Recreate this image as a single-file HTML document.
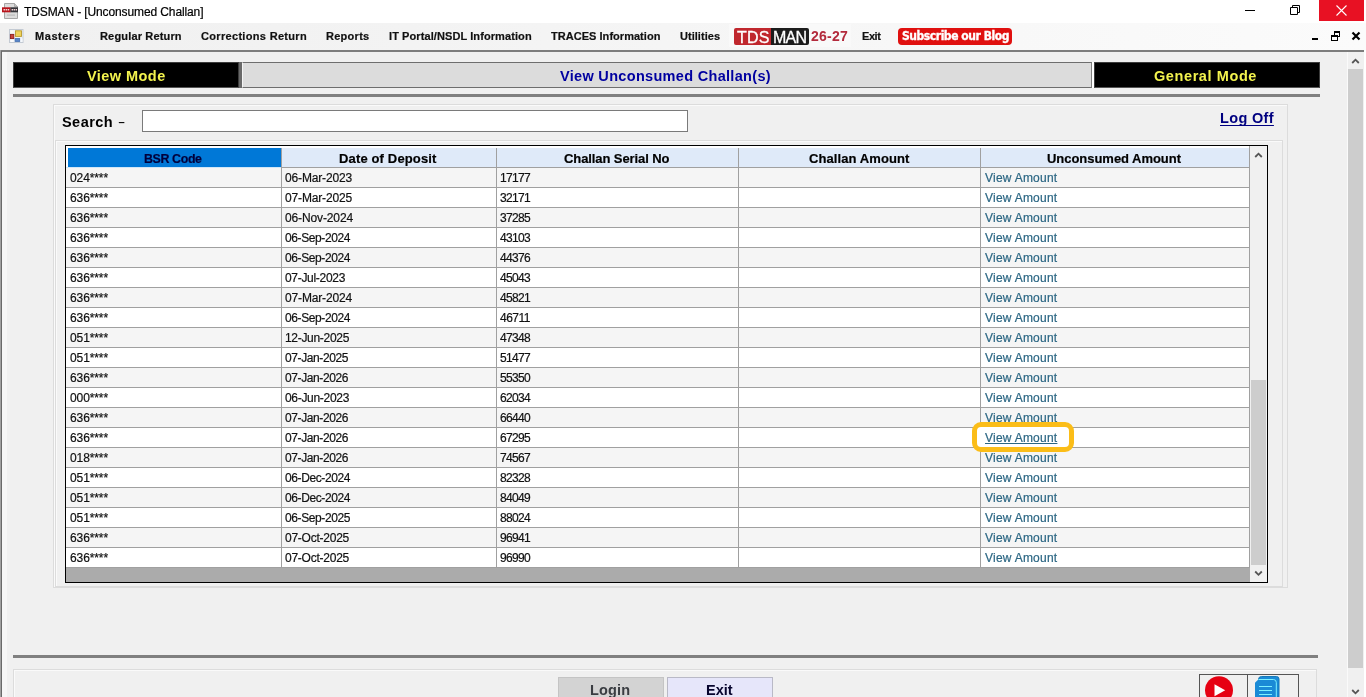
<!DOCTYPE html>
<html lang="en">
<head>
<meta charset="utf-8">
<title>TDSMAN - [Unconsumed Challan]</title>
<style>
html,body{margin:0;padding:0;}
body{width:1366px;height:697px;overflow:hidden;background:#f0f0f0;position:relative;font-family:"Liberation Sans",Arial,sans-serif;}
.b{position:absolute;box-sizing:border-box;}
.t{position:absolute;white-space:pre;margin:0;padding:0;will-change:transform;}
svg{position:absolute;overflow:visible;}
</style>
</head>
<body>
<!-- title bar -->
<div class="b" style="left:0;top:0;width:1366px;height:23px;background:#fff"></div>
<!-- menu bar -->
<div class="b" style="left:0;top:23px;width:1366px;height:27px;background:linear-gradient(90deg,#f0f0f0 0%,#f4f4f4 40%,#fbfbfb 100%)"></div>
<!-- client frame -->
<div class="b" style="left:0;top:50px;width:1365px;height:2px;background:#7d7d7d"></div>
<div class="b" style="left:0;top:50px;width:1px;height:647px;background:#a0a0a0"></div>
<div class="b" style="left:1px;top:51px;width:1px;height:646px;background:#696969"></div>
<div class="b" style="left:2px;top:52px;width:5px;height:645px;background:#f6f6f6"></div>
<div class="b" style="left:1364px;top:50px;width:2px;height:647px;background:#fff"></div>
<!-- close button -->
<div class="b" style="left:1319px;top:0;width:45px;height:21px;background:#e81123"></div>
<svg style="left:0;top:0" width="1366" height="52">
  <path d="M1245 10.5H1255" stroke="#000" stroke-width="1" fill="none"/>
  <path d="M1290.5 7.5H1297.5V14.5H1290.5Z M1292.5 7.5V5.5H1299.5V12.5H1297.5" stroke="#000" stroke-width="1" fill="none"/>
  <path d="M1336.5 5.5L1346.5 15.5M1346.5 5.5L1336.5 15.5" stroke="#fff" stroke-width="1.1" fill="none"/>
  <!-- mdi controls -->
  <path d="M1312 39H1318" stroke="#000" stroke-width="2" fill="none"/>
  <g fill="#000" shape-rendering="crispEdges">
    <rect x="1334" y="31" width="6" height="2"/><rect x="1334" y="31" width="1" height="4"/><rect x="1339" y="31" width="1" height="6"/><rect x="1338" y="36" width="2" height="1"/>
    <rect x="1331" y="35" width="7" height="2"/><rect x="1331" y="35" width="1" height="6"/><rect x="1337" y="35" width="1" height="6"/><rect x="1331" y="40" width="7" height="1"/>
  </g>
  <path d="M1352.5 32.5L1359.5 39.5M1359.5 32.5L1352.5 39.5" stroke="#000" stroke-width="2.2" fill="none"/>
</svg>
<!-- title icon -->
<svg style="left:2px;top:3px" width="17" height="17" viewBox="0 0 17 17">
  <path d="M2.5 0.5H12.5L15.5 3.5V15.5H2.5Z" fill="#dcdcdc" stroke="#a6a6a6" stroke-width="1"/>
  <path d="M12.5 0.5V3.5H15.5" fill="#c4c4c4" stroke="#a0a0a0" stroke-width="0.8"/>
  <rect x="0" y="4.3" width="8.6" height="5" fill="#b8141c"/>
  <rect x="8.4" y="4.3" width="7.6" height="5" fill="#35353a"/>
  <path d="M1.5 6.8H7.2M9.6 6.8H15" stroke="#f3d3d5" stroke-width="1.4" stroke-dasharray="1.5 0.6"/>
  <rect x="5" y="11.3" width="8" height="1.6" fill="#c3c3c3"/>
</svg>
<!-- menu icon -->
<svg style="left:9px;top:29px" width="15" height="14" viewBox="0 0 15 14">
  <rect x="0.5" y="0.5" width="13.5" height="13" fill="#eef1f5" stroke="#c3cad3"/>
  <rect x="1.5" y="1.5" width="3" height="2.5" fill="#fbfbf3"/>
  <rect x="1.5" y="10.5" width="3" height="2.5" fill="#fcfcfc"/>
  <rect x="11" y="9.5" width="2.5" height="3.5" fill="#f5f8fb"/>
  <rect x="6.5" y="1.8" width="6" height="5.6" fill="#eed25a" stroke="#b99a2e" stroke-width="0.9"/>
  <rect x="1.4" y="5.4" width="3.4" height="4.2" fill="#c8433c" stroke="#8e1f1c" stroke-width="0.9"/>
  <rect x="6.1" y="9.6" width="4.6" height="2.8" fill="#5a86c8" stroke="#3f6cb0" stroke-width="0.8"/>
</svg>
<!-- logo -->
<div class="b" style="left:729px;top:24px;width:122px;height:23px;background:#f9f9f9"></div>
<div class="b" style="left:734px;top:28px;width:38px;height:17px;background:#c0272d;border-radius:2px 0 0 2px"></div>
<div class="b" style="left:771px;top:28px;width:38px;height:17px;background:#1c1c1c;border-radius:0 2px 2px 0"></div>
<!-- subscribe -->
<div class="b" style="left:898px;top:28px;width:114px;height:17px;background:#e0100f;border-radius:4px"></div>

<!-- mode bar -->
<div class="b" style="left:13px;top:62px;width:226px;height:26px;background:#000;border:1px solid #3c3c3c;border-bottom-color:#555"></div>
<div class="b" style="left:239px;top:62px;width:3px;height:26px;background:#696969"></div>
<div class="b" style="left:242px;top:62px;width:850px;height:26px;background:#dcdcdc;border-top:1px solid #6e6e6e;border-bottom:1px solid #6e6e6e;border-right:1px solid #808080;border-left:1px solid #f4f4f4"></div>
<div class="b" style="left:1092px;top:62px;width:2px;height:26px;background:#fff"></div>
<div class="b" style="left:1094px;top:62px;width:226px;height:26px;background:#000;border:1px solid #3c3c3c;border-bottom-color:#555"></div>
<div class="b" style="left:13px;top:94px;width:1307px;height:3px;background:#808080"></div>

<!-- group boxes -->
<div class="b" style="left:53px;top:104px;width:1235px;height:484px;border:1px solid #dcdcdc;box-shadow:inset 1px 1px 0 #fafafa"></div>
<div class="b" style="left:55px;top:140px;width:1228px;height:447px;border:1px solid #dcdcdc;box-shadow:inset 1px 1px 0 #fafafa"></div>
<!-- search input -->
<div class="b" style="left:142px;top:110px;width:546px;height:22px;background:#fff;border:1px solid #7a7a7a"></div>

<!-- grid -->
<div class="b" style="left:65px;top:145px;width:1203px;height:438px;background:#ababab;border:1px solid #000"></div>
<div class="b" style="left:66px;top:146px;width:1184px;height:22px;background:#fff"></div>
<div class="b" style="left:68px;top:148px;width:213px;height:19px;background:#0078d7"></div>
<div class="b" style="left:66px;top:167px;width:215px;height:1px;background:#cfe6f8"></div>
<div class="b" style="left:282px;top:148px;width:967px;height:19px;background:#dfeaf9"></div>
<div class="b" style="left:281px;top:167px;width:969px;height:1px;background:#a0a0a0"></div>
<div class="b" style="left:66px;top:168px;width:1183px;height:19px;background:#f5f5f5"></div>
<div class="b" style="left:66px;top:187px;width:1184px;height:1px;background:#a0a0a0"></div>
<div class="b" style="left:66px;top:188px;width:1183px;height:19px;background:#fff"></div>
<div class="b" style="left:66px;top:207px;width:1184px;height:1px;background:#a0a0a0"></div>
<div class="b" style="left:66px;top:208px;width:1183px;height:19px;background:#f5f5f5"></div>
<div class="b" style="left:66px;top:227px;width:1184px;height:1px;background:#a0a0a0"></div>
<div class="b" style="left:66px;top:228px;width:1183px;height:19px;background:#fff"></div>
<div class="b" style="left:66px;top:247px;width:1184px;height:1px;background:#a0a0a0"></div>
<div class="b" style="left:66px;top:248px;width:1183px;height:19px;background:#f5f5f5"></div>
<div class="b" style="left:66px;top:267px;width:1184px;height:1px;background:#a0a0a0"></div>
<div class="b" style="left:66px;top:268px;width:1183px;height:19px;background:#fff"></div>
<div class="b" style="left:66px;top:287px;width:1184px;height:1px;background:#a0a0a0"></div>
<div class="b" style="left:66px;top:288px;width:1183px;height:19px;background:#f5f5f5"></div>
<div class="b" style="left:66px;top:307px;width:1184px;height:1px;background:#a0a0a0"></div>
<div class="b" style="left:66px;top:308px;width:1183px;height:19px;background:#fff"></div>
<div class="b" style="left:66px;top:327px;width:1184px;height:1px;background:#a0a0a0"></div>
<div class="b" style="left:66px;top:328px;width:1183px;height:19px;background:#f5f5f5"></div>
<div class="b" style="left:66px;top:347px;width:1184px;height:1px;background:#a0a0a0"></div>
<div class="b" style="left:66px;top:348px;width:1183px;height:19px;background:#fff"></div>
<div class="b" style="left:66px;top:367px;width:1184px;height:1px;background:#a0a0a0"></div>
<div class="b" style="left:66px;top:368px;width:1183px;height:19px;background:#f5f5f5"></div>
<div class="b" style="left:66px;top:387px;width:1184px;height:1px;background:#a0a0a0"></div>
<div class="b" style="left:66px;top:388px;width:1183px;height:19px;background:#fff"></div>
<div class="b" style="left:66px;top:407px;width:1184px;height:1px;background:#a0a0a0"></div>
<div class="b" style="left:66px;top:408px;width:1183px;height:19px;background:#f5f5f5"></div>
<div class="b" style="left:66px;top:427px;width:1184px;height:1px;background:#a0a0a0"></div>
<div class="b" style="left:66px;top:428px;width:1183px;height:19px;background:#fff"></div>
<div class="b" style="left:66px;top:447px;width:1184px;height:1px;background:#a0a0a0"></div>
<div class="b" style="left:66px;top:448px;width:1183px;height:19px;background:#f5f5f5"></div>
<div class="b" style="left:66px;top:467px;width:1184px;height:1px;background:#a0a0a0"></div>
<div class="b" style="left:66px;top:468px;width:1183px;height:19px;background:#fff"></div>
<div class="b" style="left:66px;top:487px;width:1184px;height:1px;background:#a0a0a0"></div>
<div class="b" style="left:66px;top:488px;width:1183px;height:19px;background:#f5f5f5"></div>
<div class="b" style="left:66px;top:507px;width:1184px;height:1px;background:#a0a0a0"></div>
<div class="b" style="left:66px;top:508px;width:1183px;height:19px;background:#fff"></div>
<div class="b" style="left:66px;top:527px;width:1184px;height:1px;background:#a0a0a0"></div>
<div class="b" style="left:66px;top:528px;width:1183px;height:19px;background:#f5f5f5"></div>
<div class="b" style="left:66px;top:547px;width:1184px;height:1px;background:#a0a0a0"></div>
<div class="b" style="left:66px;top:548px;width:1183px;height:19px;background:#fff"></div>
<div class="b" style="left:66px;top:567px;width:1184px;height:1px;background:#a0a0a0"></div>
<div class="b" style="left:281px;top:148px;width:1px;height:420px;background:#a0a0a0"></div>
<div class="b" style="left:496px;top:148px;width:1px;height:420px;background:#a0a0a0"></div>
<div class="b" style="left:738px;top:148px;width:1px;height:420px;background:#a0a0a0"></div>
<div class="b" style="left:980px;top:148px;width:1px;height:420px;background:#a0a0a0"></div>
<div class="b" style="left:1249px;top:146px;width:1px;height:422px;background:#a0a0a0"></div>
<!-- grid scrollbar -->
<div class="b" style="left:1250px;top:146px;width:17px;height:436px;background:#f0f0f0"></div>
<div class="b" style="left:1251px;top:380px;width:15px;height:185px;background:#cdcdcd"></div>
<svg style="left:1250px;top:146px" width="17" height="436">
  <path d="M5.2 11L8.5 7.7L11.8 11" stroke="#555" stroke-width="1.8" fill="none"/>
  <path d="M5.2 425.5L8.5 428.8L11.8 425.5" stroke="#555" stroke-width="1.8" fill="none"/>
</svg>
<!-- highlight -->
<div class="b" style="left:972px;top:422px;width:102px;height:30px;border:5px solid #fbbd18;border-radius:9px;background:#fff"></div>

<!-- bottom -->
<div class="b" style="left:13px;top:655px;width:1305px;height:3px;background:#808080"></div>
<div class="b" style="left:13px;top:669px;width:1304px;height:40px;border:1px solid #dcdcdc;box-shadow:inset 1px 1px 0 #fafafa"></div>
<div class="b" style="left:558px;top:677px;width:106px;height:30px;background:#d3d3d3;border:1px solid #c4c4c4"></div>
<div class="b" style="left:667px;top:677px;width:106px;height:30px;background:#e6e6fa;border:1px solid #b9b9c6"></div>
<div class="b" style="left:1199px;top:674px;width:100px;height:30px;border:1px solid #555"></div>
<div class="b" style="left:1247px;top:674px;width:1px;height:30px;background:#555"></div>
<svg style="left:1199px;top:674px" width="100" height="23">
  <circle cx="20" cy="16.2" r="14" fill="#e60012"/>
  <path d="M15.5 10.2L26.2 16.2L15.5 22.2Z" fill="#fff"/>
  <path d="M59.5 5.5Q59.5 2.5 62.5 2.5H77.5Q80 2.5 80 5V23H59.5Z" fill="#1a8ad6" stroke="#157ab8" stroke-width="1"/>
  <path d="M56 8.8L59.3 5.5H74.5Q77 5.5 77 8V23H56Z" fill="#1a8ad6"/>
  <path d="M59.5 5.5H74.5Q77.3 5.5 77.3 8.5V23" stroke="#7df0ff" stroke-width="1" fill="none"/>
  <path d="M60 12.5H73M60 16.5H73M60 20.5H73" stroke="#7df0ff" stroke-width="1.2" fill="none"/>
</svg>

<!-- main scrollbar -->
<div class="b" style="left:1347px;top:52px;width:17px;height:645px;background:#f0f0f0"></div>
<div class="b" style="left:1347px;top:52px;width:1px;height:645px;background:#fafafa"></div>
<div class="b" style="left:1348px;top:69px;width:15px;height:599px;background:#cdcdcd"></div>
<svg style="left:1347px;top:52px" width="17" height="645">
  <path d="M5.2 11L8.5 7.7L11.8 11" stroke="#555" stroke-width="1.8" fill="none"/>
  <path d="M5.2 638L8.5 641.3L11.8 638" stroke="#555" stroke-width="1.8" fill="none"/>
</svg>

<!-- texts -->
<div class="t" style="left:23.80px;top:5.00px;font-size:12px;line-height:14px;font-weight:400;color:#000;letter-spacing:-0.116px;-webkit-text-stroke:0.2px #000;">TDSMAN - [Unconsumed Challan]</div>
<div class="t" style="left:35.40px;top:30.00px;font-size:11px;line-height:12px;font-weight:700;color:#111;letter-spacing:0.570px;-webkit-text-stroke:0.2px #111;">Masters</div>
<div class="t" style="left:100.10px;top:30.00px;font-size:11px;line-height:12px;font-weight:700;color:#111;letter-spacing:0.164px;-webkit-text-stroke:0.2px #111;">Regular Return</div>
<div class="t" style="left:200.90px;top:30.00px;font-size:11px;line-height:12px;font-weight:700;color:#111;letter-spacing:0.321px;-webkit-text-stroke:0.2px #111;">Corrections Return</div>
<div class="t" style="left:326.00px;top:30.00px;font-size:11px;line-height:12px;font-weight:700;color:#111;letter-spacing:0.273px;-webkit-text-stroke:0.2px #111;">Reports</div>
<div class="t" style="left:389.00px;top:30.00px;font-size:11px;line-height:12px;font-weight:700;color:#111;letter-spacing:0.090px;-webkit-text-stroke:0.2px #111;">IT Portal/NSDL Information</div>
<div class="t" style="left:551.30px;top:30.00px;font-size:11px;line-height:12px;font-weight:700;color:#111;letter-spacing:0.036px;-webkit-text-stroke:0.2px #111;">TRACES Information</div>
<div class="t" style="left:680.10px;top:30.00px;font-size:11px;line-height:12px;font-weight:700;color:#111;letter-spacing:0.033px;-webkit-text-stroke:0.2px #111;">Utilities</div>
<div class="t" style="left:862.10px;top:30.00px;font-size:11px;line-height:12px;font-weight:700;color:#111;letter-spacing:-0.429px;-webkit-text-stroke:0.2px #111;">Exit</div>
<div class="t" style="left:87.20px;top:68.00px;font-size:14.5px;line-height:16px;font-weight:700;color:#f3f34e;letter-spacing:0.441px;">View Mode</div>
<div class="t" style="left:560.00px;top:68.00px;font-size:14.5px;line-height:16px;font-weight:700;color:#0000a0;letter-spacing:0.313px;">View Unconsumed Challan(s)</div>
<div class="t" style="left:1154.20px;top:68.00px;font-size:14.5px;line-height:16px;font-weight:700;color:#f3f34e;letter-spacing:0.592px;">General Mode</div>
<div class="t" style="left:62.40px;top:114.00px;font-size:14.5px;line-height:16px;font-weight:700;color:#000;letter-spacing:0.445px;">Search <span style="position:absolute;left:55.90px;top:-1px;font-size:15px;letter-spacing:0;transform:scale(1.45,0.6);transform-origin:0 70%">-</span></div>
<div class="t" style="left:1220.20px;top:110.00px;font-size:14.5px;line-height:16px;font-weight:700;color:#000080;letter-spacing:0.336px;text-decoration:underline;text-decoration-thickness:1px;text-underline-offset:2px;text-decoration-skip-ink:none;">Log Off</div>
<div class="t" style="left:590.40px;top:682.00px;font-size:14.5px;line-height:16px;font-weight:700;color:#3a3d42;letter-spacing:0.133px;">Login</div>
<div class="t" style="left:706.20px;top:682.00px;font-size:14.5px;line-height:16px;font-weight:700;color:#07052e;letter-spacing:0.002px;">Exit</div>
<div class="t" style="left:143.60px;top:152.00px;font-size:12.4px;line-height:14px;font-weight:700;color:#00003c;letter-spacing:-0.371px;-webkit-text-stroke:0.2px #00003c;">BSR Code</div>
<div class="t" style="left:339.40px;top:151.00px;font-size:13px;line-height:15px;font-weight:700;color:#000;letter-spacing:0.147px;-webkit-text-stroke:0.2px #000;">Date of Deposit</div>
<div class="t" style="left:564.30px;top:151.00px;font-size:13px;line-height:15px;font-weight:700;color:#000;letter-spacing:-0.089px;-webkit-text-stroke:0.2px #000;">Challan Serial No</div>
<div class="t" style="left:808.80px;top:151.00px;font-size:13px;line-height:15px;font-weight:700;color:#000;letter-spacing:0.093px;-webkit-text-stroke:0.2px #000;">Challan Amount</div>
<div class="t" style="left:1047.20px;top:151.00px;font-size:13px;line-height:15px;font-weight:700;color:#000;letter-spacing:-0.036px;-webkit-text-stroke:0.2px #000;">Unconsumed Amount</div>
<div class="t" style="left:69.70px;top:171.00px;font-size:12px;line-height:14px;font-weight:400;color:#111;letter-spacing:-0.100px;-webkit-text-stroke:0.2px #111;">024****</div>
<div class="t" style="left:284.80px;top:171.00px;font-size:12px;line-height:14px;font-weight:400;color:#111;letter-spacing:-0.155px;-webkit-text-stroke:0.2px #111;">06-Mar-2023</div>
<div class="t" style="left:500.20px;top:171.00px;font-size:12px;line-height:14px;font-weight:400;color:#111;letter-spacing:-0.675px;-webkit-text-stroke:0.2px #111;">17177</div>
<div class="t" style="left:985.00px;top:171.00px;font-size:12px;line-height:14px;font-weight:400;color:#2b6683;letter-spacing:0.237px;-webkit-text-stroke:0.2px #2b6683;">View Amount</div>
<div class="t" style="left:69.70px;top:191.00px;font-size:12px;line-height:14px;font-weight:400;color:#111;letter-spacing:-0.100px;-webkit-text-stroke:0.2px #111;">636****</div>
<div class="t" style="left:284.80px;top:191.00px;font-size:12px;line-height:14px;font-weight:400;color:#111;letter-spacing:-0.155px;-webkit-text-stroke:0.2px #111;">07-Mar-2025</div>
<div class="t" style="left:500.20px;top:191.00px;font-size:12px;line-height:14px;font-weight:400;color:#111;letter-spacing:-0.675px;-webkit-text-stroke:0.2px #111;">32171</div>
<div class="t" style="left:985.00px;top:191.00px;font-size:12px;line-height:14px;font-weight:400;color:#2b6683;letter-spacing:0.237px;-webkit-text-stroke:0.2px #2b6683;">View Amount</div>
<div class="t" style="left:69.70px;top:211.00px;font-size:12px;line-height:14px;font-weight:400;color:#111;letter-spacing:-0.100px;-webkit-text-stroke:0.2px #111;">636****</div>
<div class="t" style="left:284.80px;top:211.00px;font-size:12px;line-height:14px;font-weight:400;color:#111;letter-spacing:-0.125px;-webkit-text-stroke:0.2px #111;">06-Nov-2024</div>
<div class="t" style="left:500.20px;top:211.00px;font-size:12px;line-height:14px;font-weight:400;color:#111;letter-spacing:-0.675px;-webkit-text-stroke:0.2px #111;">37285</div>
<div class="t" style="left:985.00px;top:211.00px;font-size:12px;line-height:14px;font-weight:400;color:#2b6683;letter-spacing:0.237px;-webkit-text-stroke:0.2px #2b6683;">View Amount</div>
<div class="t" style="left:69.70px;top:231.00px;font-size:12px;line-height:14px;font-weight:400;color:#111;letter-spacing:-0.100px;-webkit-text-stroke:0.2px #111;">636****</div>
<div class="t" style="left:284.80px;top:231.00px;font-size:12px;line-height:14px;font-weight:400;color:#111;letter-spacing:-0.399px;-webkit-text-stroke:0.2px #111;">06-Sep-2024</div>
<div class="t" style="left:500.20px;top:231.00px;font-size:12px;line-height:14px;font-weight:400;color:#111;letter-spacing:-0.675px;-webkit-text-stroke:0.2px #111;">43103</div>
<div class="t" style="left:985.00px;top:231.00px;font-size:12px;line-height:14px;font-weight:400;color:#2b6683;letter-spacing:0.237px;-webkit-text-stroke:0.2px #2b6683;">View Amount</div>
<div class="t" style="left:69.70px;top:251.00px;font-size:12px;line-height:14px;font-weight:400;color:#111;letter-spacing:-0.100px;-webkit-text-stroke:0.2px #111;">636****</div>
<div class="t" style="left:284.80px;top:251.00px;font-size:12px;line-height:14px;font-weight:400;color:#111;letter-spacing:-0.399px;-webkit-text-stroke:0.2px #111;">06-Sep-2024</div>
<div class="t" style="left:500.20px;top:251.00px;font-size:12px;line-height:14px;font-weight:400;color:#111;letter-spacing:-0.675px;-webkit-text-stroke:0.2px #111;">44376</div>
<div class="t" style="left:985.00px;top:251.00px;font-size:12px;line-height:14px;font-weight:400;color:#2b6683;letter-spacing:0.237px;-webkit-text-stroke:0.2px #2b6683;">View Amount</div>
<div class="t" style="left:69.70px;top:271.00px;font-size:12px;line-height:14px;font-weight:400;color:#111;letter-spacing:-0.100px;-webkit-text-stroke:0.2px #111;">636****</div>
<div class="t" style="left:284.80px;top:271.00px;font-size:12px;line-height:14px;font-weight:400;color:#111;letter-spacing:-0.307px;-webkit-text-stroke:0.2px #111;">07-Jul-2023</div>
<div class="t" style="left:500.20px;top:271.00px;font-size:12px;line-height:14px;font-weight:400;color:#111;letter-spacing:-0.675px;-webkit-text-stroke:0.2px #111;">45043</div>
<div class="t" style="left:985.00px;top:271.00px;font-size:12px;line-height:14px;font-weight:400;color:#2b6683;letter-spacing:0.237px;-webkit-text-stroke:0.2px #2b6683;">View Amount</div>
<div class="t" style="left:69.70px;top:291.00px;font-size:12px;line-height:14px;font-weight:400;color:#111;letter-spacing:-0.100px;-webkit-text-stroke:0.2px #111;">636****</div>
<div class="t" style="left:284.80px;top:291.00px;font-size:12px;line-height:14px;font-weight:400;color:#111;letter-spacing:-0.155px;-webkit-text-stroke:0.2px #111;">07-Mar-2024</div>
<div class="t" style="left:500.20px;top:291.00px;font-size:12px;line-height:14px;font-weight:400;color:#111;letter-spacing:-0.675px;-webkit-text-stroke:0.2px #111;">45821</div>
<div class="t" style="left:985.00px;top:291.00px;font-size:12px;line-height:14px;font-weight:400;color:#2b6683;letter-spacing:0.237px;-webkit-text-stroke:0.2px #2b6683;">View Amount</div>
<div class="t" style="left:69.70px;top:311.00px;font-size:12px;line-height:14px;font-weight:400;color:#111;letter-spacing:-0.100px;-webkit-text-stroke:0.2px #111;">636****</div>
<div class="t" style="left:284.80px;top:311.00px;font-size:12px;line-height:14px;font-weight:400;color:#111;letter-spacing:-0.399px;-webkit-text-stroke:0.2px #111;">06-Sep-2024</div>
<div class="t" style="left:500.20px;top:311.00px;font-size:12px;line-height:14px;font-weight:400;color:#111;letter-spacing:-0.497px;-webkit-text-stroke:0.2px #111;">46711</div>
<div class="t" style="left:985.00px;top:311.00px;font-size:12px;line-height:14px;font-weight:400;color:#2b6683;letter-spacing:0.237px;-webkit-text-stroke:0.2px #2b6683;">View Amount</div>
<div class="t" style="left:69.70px;top:331.00px;font-size:12px;line-height:14px;font-weight:400;color:#111;letter-spacing:-0.100px;-webkit-text-stroke:0.2px #111;">051****</div>
<div class="t" style="left:284.80px;top:331.00px;font-size:12px;line-height:14px;font-weight:400;color:#111;letter-spacing:-0.308px;-webkit-text-stroke:0.2px #111;">12-Jun-2025</div>
<div class="t" style="left:500.20px;top:331.00px;font-size:12px;line-height:14px;font-weight:400;color:#111;letter-spacing:-0.675px;-webkit-text-stroke:0.2px #111;">47348</div>
<div class="t" style="left:985.00px;top:331.00px;font-size:12px;line-height:14px;font-weight:400;color:#2b6683;letter-spacing:0.237px;-webkit-text-stroke:0.2px #2b6683;">View Amount</div>
<div class="t" style="left:69.70px;top:351.00px;font-size:12px;line-height:14px;font-weight:400;color:#111;letter-spacing:-0.100px;-webkit-text-stroke:0.2px #111;">051****</div>
<div class="t" style="left:284.80px;top:351.00px;font-size:12px;line-height:14px;font-weight:400;color:#111;letter-spacing:-0.399px;-webkit-text-stroke:0.2px #111;">07-Jan-2025</div>
<div class="t" style="left:500.20px;top:351.00px;font-size:12px;line-height:14px;font-weight:400;color:#111;letter-spacing:-0.675px;-webkit-text-stroke:0.2px #111;">51477</div>
<div class="t" style="left:985.00px;top:351.00px;font-size:12px;line-height:14px;font-weight:400;color:#2b6683;letter-spacing:0.237px;-webkit-text-stroke:0.2px #2b6683;">View Amount</div>
<div class="t" style="left:69.70px;top:371.00px;font-size:12px;line-height:14px;font-weight:400;color:#111;letter-spacing:-0.100px;-webkit-text-stroke:0.2px #111;">636****</div>
<div class="t" style="left:284.80px;top:371.00px;font-size:12px;line-height:14px;font-weight:400;color:#111;letter-spacing:-0.399px;-webkit-text-stroke:0.2px #111;">07-Jan-2026</div>
<div class="t" style="left:500.20px;top:371.00px;font-size:12px;line-height:14px;font-weight:400;color:#111;letter-spacing:-0.675px;-webkit-text-stroke:0.2px #111;">55350</div>
<div class="t" style="left:985.00px;top:371.00px;font-size:12px;line-height:14px;font-weight:400;color:#2b6683;letter-spacing:0.237px;-webkit-text-stroke:0.2px #2b6683;">View Amount</div>
<div class="t" style="left:69.70px;top:391.00px;font-size:12px;line-height:14px;font-weight:400;color:#111;letter-spacing:-0.100px;-webkit-text-stroke:0.2px #111;">000****</div>
<div class="t" style="left:284.80px;top:391.00px;font-size:12px;line-height:14px;font-weight:400;color:#111;letter-spacing:-0.308px;-webkit-text-stroke:0.2px #111;">06-Jun-2023</div>
<div class="t" style="left:500.20px;top:391.00px;font-size:12px;line-height:14px;font-weight:400;color:#111;letter-spacing:-0.675px;-webkit-text-stroke:0.2px #111;">62034</div>
<div class="t" style="left:985.00px;top:391.00px;font-size:12px;line-height:14px;font-weight:400;color:#2b6683;letter-spacing:0.237px;-webkit-text-stroke:0.2px #2b6683;">View Amount</div>
<div class="t" style="left:69.70px;top:411.00px;font-size:12px;line-height:14px;font-weight:400;color:#111;letter-spacing:-0.100px;-webkit-text-stroke:0.2px #111;">636****</div>
<div class="t" style="left:284.80px;top:411.00px;font-size:12px;line-height:14px;font-weight:400;color:#111;letter-spacing:-0.399px;-webkit-text-stroke:0.2px #111;">07-Jan-2026</div>
<div class="t" style="left:500.20px;top:411.00px;font-size:12px;line-height:14px;font-weight:400;color:#111;letter-spacing:-0.675px;-webkit-text-stroke:0.2px #111;">66440</div>
<div class="t" style="left:985.00px;top:411.00px;font-size:12px;line-height:14px;font-weight:400;color:#2b6683;letter-spacing:0.237px;-webkit-text-stroke:0.2px #2b6683;">View Amount</div>
<div class="t" style="left:69.70px;top:431.00px;font-size:12px;line-height:14px;font-weight:400;color:#111;letter-spacing:-0.100px;-webkit-text-stroke:0.2px #111;">636****</div>
<div class="t" style="left:284.80px;top:431.00px;font-size:12px;line-height:14px;font-weight:400;color:#111;letter-spacing:-0.399px;-webkit-text-stroke:0.2px #111;">07-Jan-2026</div>
<div class="t" style="left:500.20px;top:431.00px;font-size:12px;line-height:14px;font-weight:400;color:#111;letter-spacing:-0.675px;-webkit-text-stroke:0.2px #111;">67295</div>
<div class="t" style="left:985.00px;top:431.00px;font-size:12px;line-height:14px;font-weight:400;color:#2b6683;letter-spacing:0.237px;-webkit-text-stroke:0.2px #2b6683;text-decoration:underline;text-decoration-thickness:1px;text-underline-offset:1px;text-decoration-skip-ink:none;">View Amount</div>
<div class="t" style="left:69.70px;top:451.00px;font-size:12px;line-height:14px;font-weight:400;color:#111;letter-spacing:-0.100px;-webkit-text-stroke:0.2px #111;">018****</div>
<div class="t" style="left:284.80px;top:451.00px;font-size:12px;line-height:14px;font-weight:400;color:#111;letter-spacing:-0.399px;-webkit-text-stroke:0.2px #111;">07-Jan-2026</div>
<div class="t" style="left:500.20px;top:451.00px;font-size:12px;line-height:14px;font-weight:400;color:#111;letter-spacing:-0.675px;-webkit-text-stroke:0.2px #111;">74567</div>
<div class="t" style="left:985.00px;top:451.00px;font-size:12px;line-height:14px;font-weight:400;color:#2b6683;letter-spacing:0.237px;-webkit-text-stroke:0.2px #2b6683;">View Amount</div>
<div class="t" style="left:69.70px;top:471.00px;font-size:12px;line-height:14px;font-weight:400;color:#111;letter-spacing:-0.100px;-webkit-text-stroke:0.2px #111;">051****</div>
<div class="t" style="left:284.80px;top:471.00px;font-size:12px;line-height:14px;font-weight:400;color:#111;letter-spacing:-0.398px;-webkit-text-stroke:0.2px #111;">06-Dec-2024</div>
<div class="t" style="left:500.20px;top:471.00px;font-size:12px;line-height:14px;font-weight:400;color:#111;letter-spacing:-0.675px;-webkit-text-stroke:0.2px #111;">82328</div>
<div class="t" style="left:985.00px;top:471.00px;font-size:12px;line-height:14px;font-weight:400;color:#2b6683;letter-spacing:0.237px;-webkit-text-stroke:0.2px #2b6683;">View Amount</div>
<div class="t" style="left:69.70px;top:491.00px;font-size:12px;line-height:14px;font-weight:400;color:#111;letter-spacing:-0.100px;-webkit-text-stroke:0.2px #111;">051****</div>
<div class="t" style="left:284.80px;top:491.00px;font-size:12px;line-height:14px;font-weight:400;color:#111;letter-spacing:-0.398px;-webkit-text-stroke:0.2px #111;">06-Dec-2024</div>
<div class="t" style="left:500.20px;top:491.00px;font-size:12px;line-height:14px;font-weight:400;color:#111;letter-spacing:-0.675px;-webkit-text-stroke:0.2px #111;">84049</div>
<div class="t" style="left:985.00px;top:491.00px;font-size:12px;line-height:14px;font-weight:400;color:#2b6683;letter-spacing:0.237px;-webkit-text-stroke:0.2px #2b6683;">View Amount</div>
<div class="t" style="left:69.70px;top:511.00px;font-size:12px;line-height:14px;font-weight:400;color:#111;letter-spacing:-0.100px;-webkit-text-stroke:0.2px #111;">051****</div>
<div class="t" style="left:284.80px;top:511.00px;font-size:12px;line-height:14px;font-weight:400;color:#111;letter-spacing:-0.399px;-webkit-text-stroke:0.2px #111;">06-Sep-2025</div>
<div class="t" style="left:500.20px;top:511.00px;font-size:12px;line-height:14px;font-weight:400;color:#111;letter-spacing:-0.675px;-webkit-text-stroke:0.2px #111;">88024</div>
<div class="t" style="left:985.00px;top:511.00px;font-size:12px;line-height:14px;font-weight:400;color:#2b6683;letter-spacing:0.237px;-webkit-text-stroke:0.2px #2b6683;">View Amount</div>
<div class="t" style="left:69.70px;top:531.00px;font-size:12px;line-height:14px;font-weight:400;color:#111;letter-spacing:-0.100px;-webkit-text-stroke:0.2px #111;">636****</div>
<div class="t" style="left:284.80px;top:531.00px;font-size:12px;line-height:14px;font-weight:400;color:#111;letter-spacing:-0.246px;-webkit-text-stroke:0.2px #111;">07-Oct-2025</div>
<div class="t" style="left:500.20px;top:531.00px;font-size:12px;line-height:14px;font-weight:400;color:#111;letter-spacing:-0.675px;-webkit-text-stroke:0.2px #111;">96941</div>
<div class="t" style="left:985.00px;top:531.00px;font-size:12px;line-height:14px;font-weight:400;color:#2b6683;letter-spacing:0.237px;-webkit-text-stroke:0.2px #2b6683;">View Amount</div>
<div class="t" style="left:69.70px;top:551.00px;font-size:12px;line-height:14px;font-weight:400;color:#111;letter-spacing:-0.100px;-webkit-text-stroke:0.2px #111;">636****</div>
<div class="t" style="left:284.80px;top:551.00px;font-size:12px;line-height:14px;font-weight:400;color:#111;letter-spacing:-0.246px;-webkit-text-stroke:0.2px #111;">07-Oct-2025</div>
<div class="t" style="left:500.20px;top:551.00px;font-size:12px;line-height:14px;font-weight:400;color:#111;letter-spacing:-0.675px;-webkit-text-stroke:0.2px #111;">96990</div>
<div class="t" style="left:985.00px;top:551.00px;font-size:12px;line-height:14px;font-weight:400;color:#2b6683;letter-spacing:0.237px;-webkit-text-stroke:0.2px #2b6683;">View Amount</div>
<div class="t" style="left:737.00px;top:29.00px;font-size:16px;line-height:17px;font-weight:400;color:#fff;letter-spacing:0.250px;-webkit-text-stroke:0.3px #fff;">TDS</div>
<div class="t" style="left:772.60px;top:29.00px;font-size:16px;line-height:17px;font-weight:400;color:#fff;letter-spacing:-0.781px;-webkit-text-stroke:0.3px #fff;">MAN</div>
<div class="t" style="left:811.40px;top:28.00px;font-size:14px;line-height:16px;font-weight:700;color:#b32a3c;letter-spacing:0.247px;">26-27</div>
<div class="t" style="left:901.60px;top:29.00px;font-size:12px;line-height:14px;font-family:'DejaVu Sans Condensed','DejaVu Sans',sans-serif;font-weight:700;color:#fff;letter-spacing:-0.453px;-webkit-text-stroke:0.35px #fff;">Subscribe our Blog</div>
</body>
</html>
